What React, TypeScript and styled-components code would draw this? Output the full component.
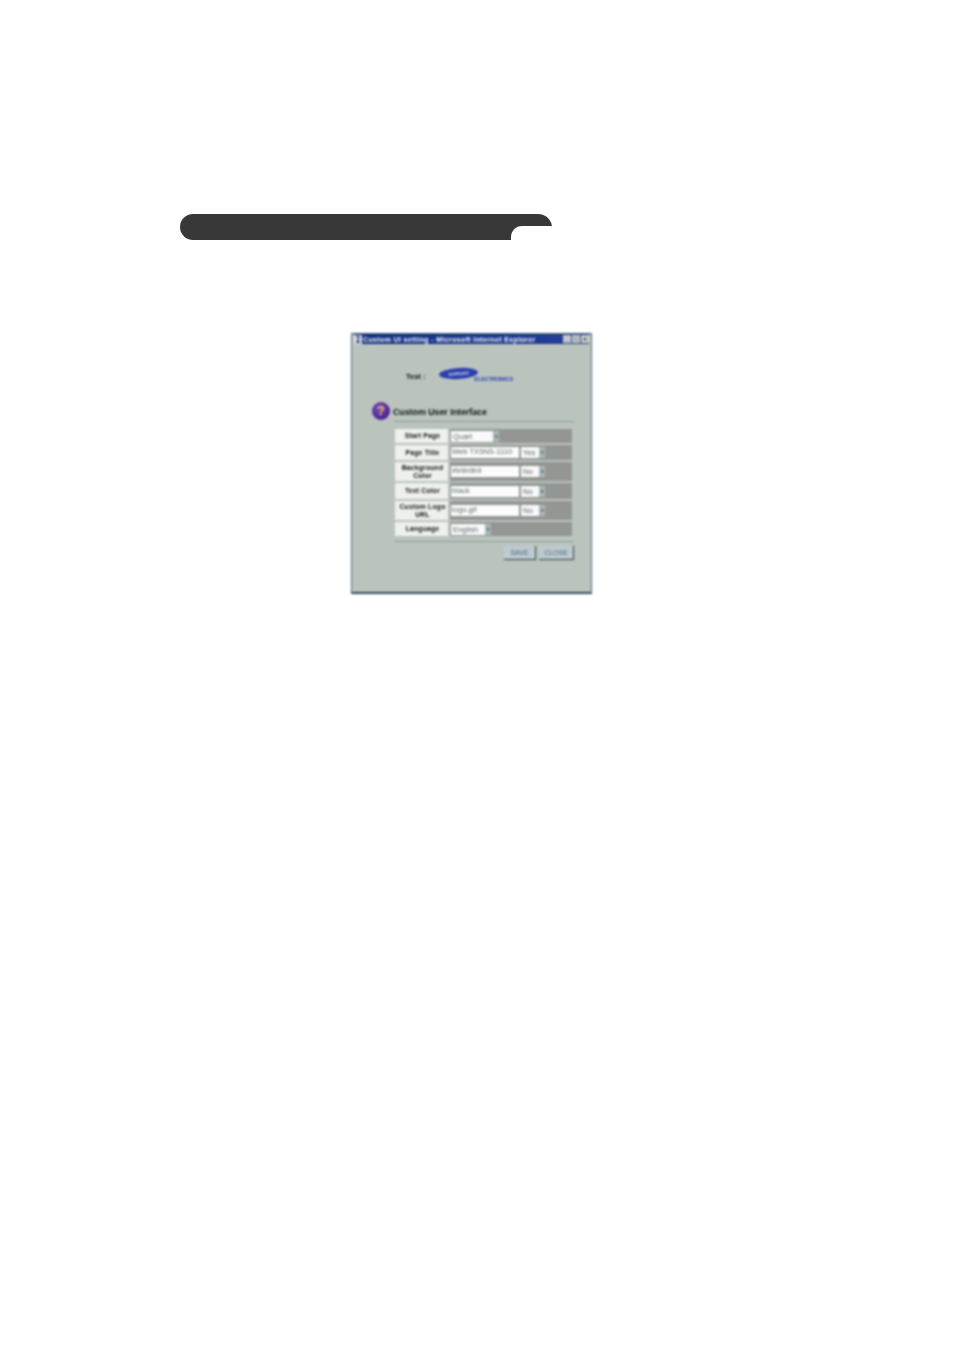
import React from 'react';
import styled, { createGlobalStyle } from 'styled-components';

const GlobalStyle = createGlobalStyle`
  html, body {
    margin: 0;
    padding: 0;
    background: #fff;
  }
`;

const Page = styled.div`
  width: 954px;
  height: 1351px;
  box-sizing: border-box;
  padding: 214px 0 0 180px;
  font-family: 'Liberation Sans', Arial, sans-serif;
  overflow: hidden;
`;

const HeadingBar = styled.div`
  position: relative;
  width: 372px;
  height: 26px;
  background: #383838;
  border-radius: 13px 14px 0 13px;
  overflow: hidden;
`;

const HeadingNotch = styled.div`
  position: absolute;
  right: 0;
  bottom: 0;
  width: 41px;
  height: 14px;
  background: #fff;
  border-top-left-radius: 11px;
`;

const Window = styled.div`
  width: 241px;
  height: 261px;
  box-sizing: border-box;
  margin: 93px 0 0 171px;
  padding: 0 2px 2px 2px;
  background: #bac4bd;
  border: 1px solid #4f6674;
  border-bottom: 2px solid #2f4658;
  filter: blur(0.9px);
  display: flex;
  flex-direction: column;
`;

const TitleBar = styled.div`
  height: 10px;
  flex: none;
  display: flex;
  align-items: center;
  gap: 1px;
  background: linear-gradient(90deg, #0f2f80 0%, #1c3b90 70%, #2b3f95 100%);
  color: #fff;
  font-size: 7px;
  font-weight: bold;
  white-space: nowrap;
`;

const TitleIcon = styled.svg`
  width: 8px;
  height: 9px;
  flex: none;
`;

const TitleText = styled.span`
  flex: 1;
  letter-spacing: 0.36px;
`;

const WinButton = styled.span`
  width: 8px;
  height: 8px;
  flex: none;
  background: #c5cbc8;
  color: #112;
  font-size: 6px;
  line-height: 8px;
  text-align: center;
`;

const TestRow = styled.div`
  display: flex;
  align-items: center;
  height: 16px;
  margin: 24px 0 0 52px;
`;

const TestLabel = styled.span`
  width: 33px;
  font-size: 7.5px;
  font-weight: bold;
  color: #111;
`;

const Logo = styled.div`
  position: relative;
  width: 76px;
  height: 16px;
  flex: none;
`;

const LogoOval = styled.div`
  position: absolute;
  left: 0;
  top: 0;
  width: 39px;
  height: 11px;
  border-radius: 50%;
  background: #2c3fae;
  transform: rotate(-4deg);
  color: #dfe3f4;
  font-size: 4px;
  font-weight: bold;
  line-height: 11px;
  text-align: center;
`;

const LogoWord = styled.span`
  position: absolute;
  right: 2px;
  bottom: 1px;
  color: #2238a8;
  font-size: 5.4px;
  font-weight: bold;
  line-height: 7px;
`;

const FormArea = styled.div`
  margin: 18px 0 0 18px;
`;

const SectionHeader = styled.div`
  display: flex;
  align-items: center;
  gap: 3px;
  width: 202px;
`;

const HelpIcon = styled.div`
  width: 18px;
  height: 18px;
  flex: none;
  border-radius: 50%;
  background: radial-gradient(circle at 40% 35%, #7d4cc0, #4b2390 70%);
  color: #f2cb4a;
  font-size: 13px;
  font-weight: bold;
  line-height: 18px;
  text-align: center;
`;

const SectionTitle = styled.span`
  font-size: 8.8px;
  font-weight: bold;
  color: #0c1210;
  padding-top: 2px;
`;

const Rule = styled.div<{ $top: number; $bottom: number }>`
  height: 1px;
  background: #8a9c96;
  margin: ${(p) => p.$top}px 0 ${(p) => p.$bottom}px 22px;
  width: 180px;
`;

const FormTable = styled.div`
  margin-left: 23px;
  width: 177px;
  display: flex;
  flex-direction: column;
  gap: 2px;
`;

const FormRow = styled.div<{ $height: number }>`
  display: grid;
  grid-template-columns: 53px 122px;
  column-gap: 2px;
  height: ${(p) => p.$height}px;
`;

const LabelCell = styled.div`
  background: #eef0ec;
  color: #0e1412;
  font-size: 6.8px;
  font-weight: bold;
  line-height: 8px;
  letter-spacing: 0.2px;
  padding-left: 2px;
  display: flex;
  align-items: center;
  justify-content: center;
  text-align: center;
`;

const ValueCell = styled.div`
  background: #949694;
  display: flex;
  align-items: center;
  gap: 2px;
  padding-left: 1px;
`;

const TextInput = styled.div`
  width: 68px;
  height: 11px;
  box-sizing: border-box;
  background: #fbfcfb;
  color: #5a6668;
  font-size: 7.6px;
  line-height: 10px;
  padding-left: 1px;
  white-space: nowrap;
  overflow: hidden;
`;

const SelectBox = styled.div<{ $width: number }>`
  width: ${(p) => p.$width}px;
  height: 11px;
  display: flex;
  background: #f8f9f8;
  color: #5a6668;
  font-size: 7.6px;
  line-height: 11px;
  padding-left: 2px;
  box-sizing: border-box;
`;

const SelectLabel = styled.span`
  flex: 1;
`;

const SelectArrow = styled.span`
  width: 6px;
  flex: none;
  background: #a9b6b8;
  color: #1f3e4c;
  font-size: 5px;
  line-height: 11px;
  text-align: center;
`;

const ButtonRow = styled.div`
  display: flex;
  justify-content: flex-end;
  gap: 3px;
  width: 202px;
`;

const ActionButton = styled.div<{ $width: number }>`
  width: ${(p) => p.$width}px;
  height: 14px;
  box-sizing: border-box;
  background: #bccbd0;
  border-right: 1px solid #333d45;
  border-bottom: 1px solid #333d45;
  color: #4f6874;
  font-size: 7px;
  line-height: 13px;
  text-align: center;
`;

const Select = ({ value, width }: { value: string; width: number }) => (
  <SelectBox $width={width}>
    <SelectLabel>{value}</SelectLabel>
    <SelectArrow>▾</SelectArrow>
  </SelectBox>
);

export default function App() {
  return (
    <>
      <GlobalStyle />
      <Page>
        <HeadingBar>
          <HeadingNotch />
        </HeadingBar>

        <Window>
          <TitleBar>
            <TitleIcon viewBox="0 0 8 9">
              <rect width="8" height="9" fill="#d7dde0" />
              <path d="M2 1h4L4.5 4 6 8H2l2-4z" fill="#24408c" />
            </TitleIcon>
            <TitleText>Custom UI setting - Microsoft Internet Explorer</TitleText>
            <WinButton>_</WinButton>
            <WinButton>□</WinButton>
            <WinButton>×</WinButton>
          </TitleBar>

          <TestRow>
            <TestLabel>Test :</TestLabel>
            <Logo>
              <LogoOval>SAMSUNG</LogoOval>
              <LogoWord>ELECTRONICS</LogoWord>
            </Logo>
          </TestRow>

          <FormArea>
            <SectionHeader>
              <HelpIcon>?</HelpIcon>
              <SectionTitle>Custom User Interface</SectionTitle>
            </SectionHeader>
            <Rule $top={1} $bottom={7} />

            <FormTable>
              <FormRow $height={14}>
                <LabelCell>Start Page</LabelCell>
                <ValueCell>
                  <Select value="Quart" width={48} />
                </ValueCell>
              </FormRow>
              <FormRow $height={15}>
                <LabelCell>Page Title</LabelCell>
                <ValueCell>
                  <TextInput>Web TX5NS-1110</TextInput>
                  <Select value="Yes" width={24} />
                </ValueCell>
              </FormRow>
              <FormRow $height={19}>
                <LabelCell>
                  Background
                  <br />
                  Color
                </LabelCell>
                <ValueCell>
                  <TextInput>#b9b9b9</TextInput>
                  <Select value="No" width={24} />
                </ValueCell>
              </FormRow>
              <FormRow $height={16}>
                <LabelCell>Text Color</LabelCell>
                <ValueCell>
                  <TextInput>black</TextInput>
                  <Select value="No" width={24} />
                </ValueCell>
              </FormRow>
              <FormRow $height={19}>
                <LabelCell>
                  Custom Logo
                  <br />
                  URL
                </LabelCell>
                <ValueCell>
                  <TextInput>logo.gif</TextInput>
                  <Select value="No" width={24} />
                </ValueCell>
              </FormRow>
              <FormRow $height={14}>
                <LabelCell>Language</LabelCell>
                <ValueCell>
                  <Select value="English" width={40} />
                </ValueCell>
              </FormRow>
            </FormTable>

            <Rule $top={5} $bottom={4} />

            <ButtonRow>
              <ActionButton $width={32}>SAVE</ActionButton>
              <ActionButton $width={35}>CLOSE</ActionButton>
            </ButtonRow>
          </FormArea>
        </Window>
      </Page>
    </>
  );
}
